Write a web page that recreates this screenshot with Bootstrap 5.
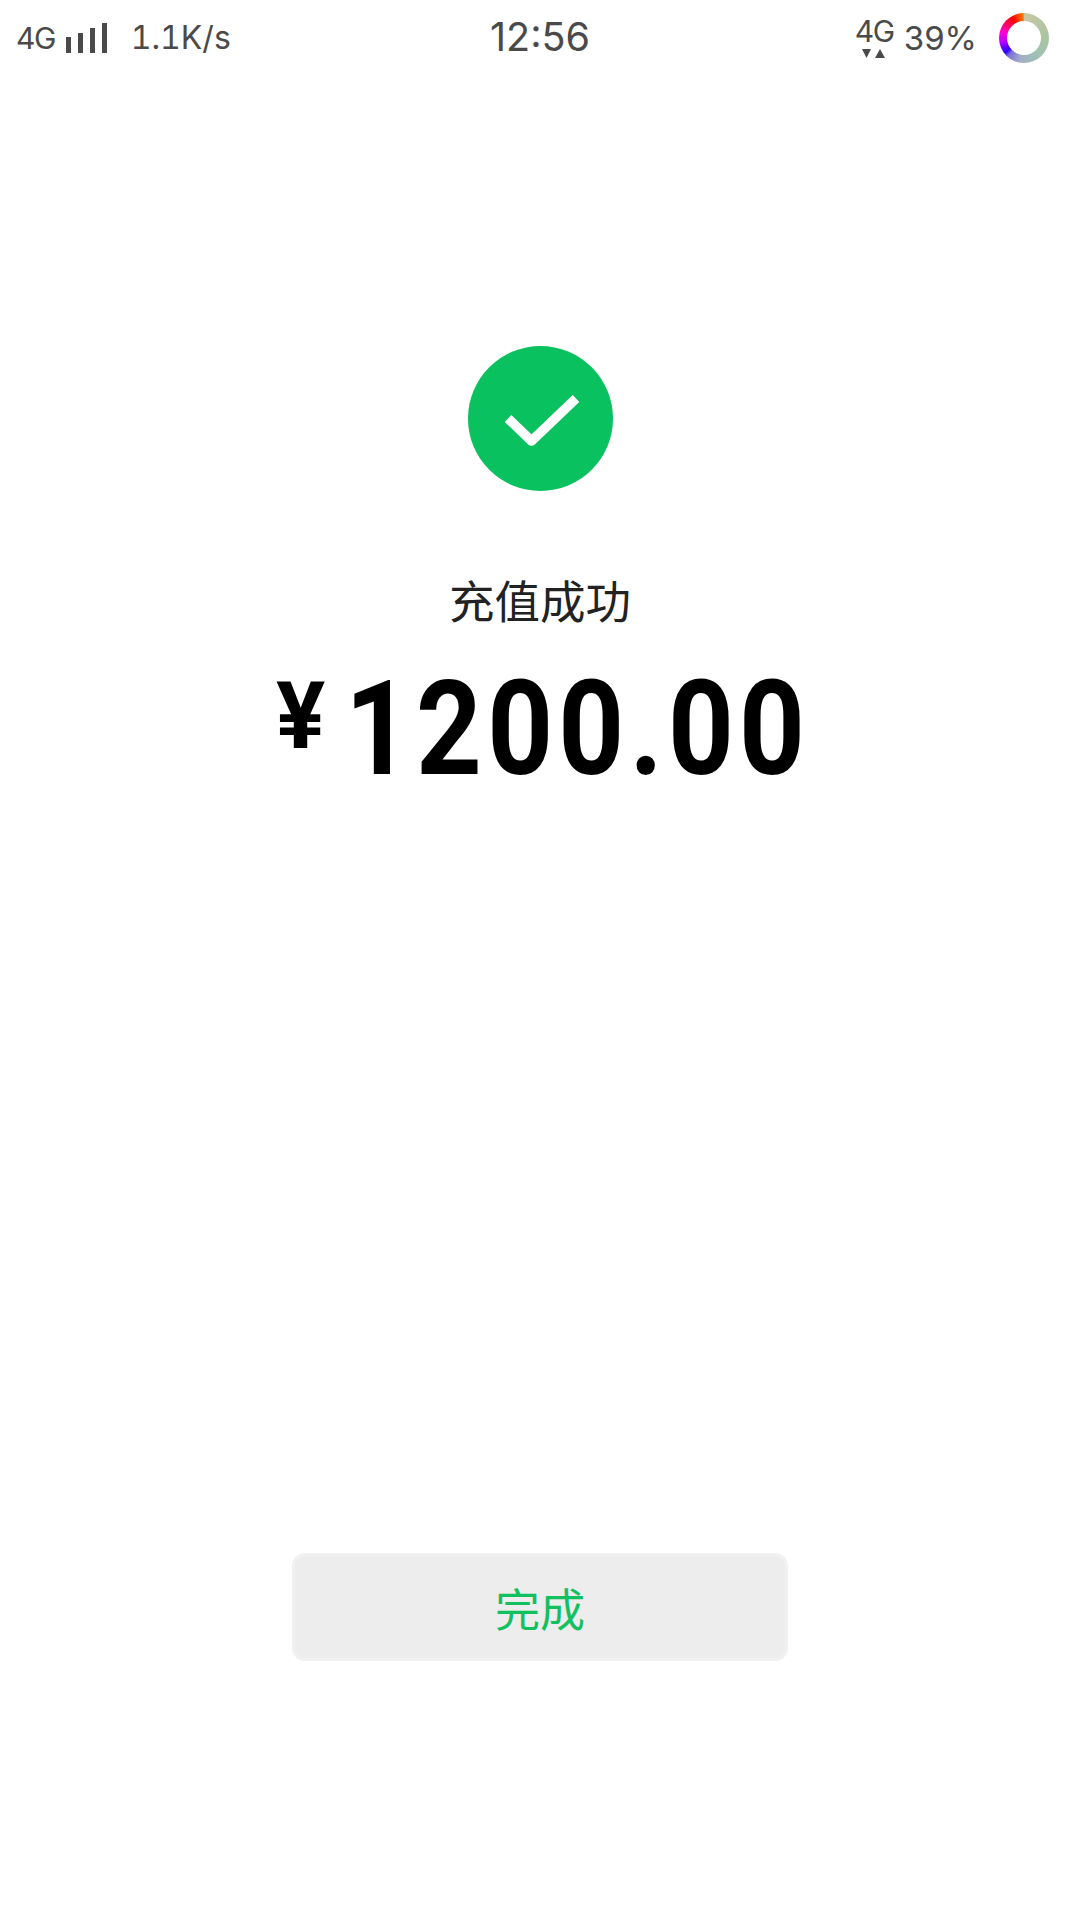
<!doctype html>
<html lang="zh"><head><meta charset="utf-8">
<link href="https://cdn.jsdelivr.net/npm/bootstrap@5.3.0/dist/css/bootstrap.min.css" rel="stylesheet">
<style>
html,body{background:#fff;}
body{width:1080px;height:1920px;overflow:hidden;font-family:Inter,"Noto Sans CJK SC",sans-serif;}
.pagebox{height:1920px;}
.statusline{height:76px;color:#4a4a4a;padding:0 16px;position:relative;}
.sideblock{flex:1 1 0;}
.net-label{font-size:30px;letter-spacing:-1.5px;line-height:1;}
.bars-icon{margin-left:11px;}
.speed-label{font-size:32px;line-height:1;margin-left:24px;font-variant-numeric:tabular-nums;}
.clock-label{font-size:39.5px;line-height:1;}
.batt-label{font-size:33px;line-height:1;margin-left:13px;}
.net-stack{width:36px;height:44px;position:relative;}
.net-stack .net-label{font-size:30px;display:block;letter-spacing:-1.5px;}
.net-stack svg{display:block;margin-top:2px;}
.ring{width:50px;height:50px;border-radius:50%;margin-left:22px;margin-right:15px;background:conic-gradient(#c9c8a4 0deg,#a9c4a0 90deg,#9fc2b4 140deg,#a3aec4 190deg,#7b6fd8 222deg,#2a00ff 232deg,#c000ff 262deg,#ff00d0 285deg,#ff0000 330deg,#ff7a00 358deg,#c9c8a4 360deg);}
.ring-hole{width:34px;height:34px;border-radius:50%;background:#fff;}
.okmark{width:145px;height:145px;margin-top:270px;}
.ok-title{font-size:45.5px;line-height:60px;color:#222;margin-top:78px;font-family:"Noto Sans CJK SC",sans-serif;}
.sum-line{margin-top:33px;color:#000;line-height:1;height:134px;}
.yen-sign{font-size:92px;font-weight:700;font-family:Roboto,sans-serif;line-height:1;margin-right:20px;margin-bottom:24px;}
.sum-digits{display:inline-block;font-size:132px;font-weight:700;font-family:Roboto,sans-serif;letter-spacing:6px;line-height:1;transform:scaleX(.87);transform-origin:left center;margin-right:-76px;}
.finish-btn{width:496px;height:108px;background:#ededed;border:3px solid #f1f1f1;border-radius:13px;color:#12c060;font-size:45px;font-family:"Noto Sans CJK SC",sans-serif;line-height:1;padding:0;}
.finish-btn:hover,.finish-btn:active{background:#ededed!important;border-color:#f1f1f1!important;color:#12c060!important;}
.btnzone{margin-top:757px;}
</style></head>
<body>
<div class="pagebox d-flex flex-column">
  <div class="statusline d-flex align-items-center">
    <div class="sideblock d-flex align-items-center">
      <span class="net-label">4G</span>
      <svg class="bars-icon" width="41" height="30" viewBox="0 0 41 30" fill="#4a4a4a"><rect x="0" y="14" width="5" height="16"/><rect x="12" y="10" width="5" height="20"/><rect x="24" y="5" width="5" height="25"/><rect x="36" y="0" width="5" height="30"/></svg>
      <span class="speed-label">1.1K/s</span>
    </div>
    <div class="clock-label">12:56</div>
    <div class="sideblock d-flex align-items-center justify-content-end">
      <div class="net-stack"><span class="net-label">4G</span>
        <svg width="34" height="11" viewBox="0 0 34 11" fill="#4a4a4a"><path d="M7 1h9l-4.500 9z"/><path d="M20 10h10l-5-9z"/></svg>
      </div>
      <span class="batt-label">39%</span>
      <div class="ring d-flex align-items-center justify-content-center"><div class="ring-hole"></div></div>
    </div>
  </div>
  <div class="d-flex flex-column align-items-center">
    <svg class="okmark" viewBox="0 0 145 145"><circle cx="72.500" cy="72.500" r="72.500" fill="#0ac15f"/><path d="M40 72.500 63.500 95 108 52.500" fill="none" stroke="#fff" stroke-width="9.500" stroke-linejoin="round"/></svg>
    <div class="ok-title">充值成功</div>
    <div class="sum-line d-flex align-items-center justify-content-center"><span class="yen-sign">¥</span><span class="sum-digits">1200.00</span></div>
    <div class="btnzone"><button type="button" class="btn finish-btn d-flex align-items-center justify-content-center">完成</button></div>
  </div>
</div>
</body></html>
